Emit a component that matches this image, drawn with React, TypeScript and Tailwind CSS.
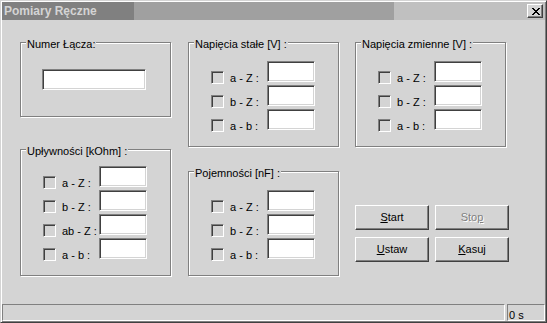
import type { ReactNode } from "react";

const sunken =
  "border border-t-[#808080] border-l-[#808080] border-b-white border-r-white shadow-[inset_1px_1px_0_#404040,inset_-1px_-1px_0_#d4d4d4]";

const closeGlyph = ["11000011", "01100110", "00111100", "00011000", "00111100", "01100110", "11000011"];

const Group = ({ label, className, children }: { label: string; className: string; children?: ReactNode }) => {
  return (
    <div className={"relative border border-[#808080] shadow-[inset_1px_1px_0_#fff,1px_1px_0_#fff] " + className}>
      <span className="absolute left-[5px] -top-[5px] whitespace-nowrap bg-[#d4d4d4] px-px leading-[13px]">
        {label}
      </span>
      {children}
    </div>
  );
};

const Row = ({ label }: { label: string }) => {
  return (
    <div className="flex h-[21px] items-start">
      <span className={"mt-[10px] h-[13px] w-[13px] bg-[#d4d4d4] " + sunken} />
      <span className="mt-[11px] w-[43px] whitespace-nowrap pl-[6px] leading-[13px]">{label}</span>
      <span className={"h-[21px] w-[48px] bg-white " + sunken} />
    </div>
  );
};

const Rows = ({ labels, top }: { labels: string[]; top: string }) => {
  return (
    <div className={"flex flex-col gap-[3px] pl-[22px] " + top}>
      {labels.map((l) => (
        <Row key={l} label={l} />
      ))}
    </div>
  );
};

const Btn = ({ children, disabled }: { children: ReactNode; disabled?: boolean }) => {
  return (
    <div
      className={
        "flex h-[25px] w-[74px] items-center justify-center border border-t-white border-l-white border-b-[#404040] border-r-[#404040] leading-[13px] shadow-[inset_-1px_-1px_0_#808080] " +
        (disabled ? "text-[#808080] [text-shadow:1px_1px_0_#fff]" : "")
      }
    >
      {children}
    </div>
  );
};

const App = () => {
  const three = ["a - Z :", "b - Z :", "a - b :"];

  return (
    <div className="h-[323px] w-[547px] bg-[#d4d4d4] font-['Liberation_Sans',Arial,sans-serif] text-[11px] text-black">
      <div className="flex h-full w-full flex-col border border-t-[#d4d4d4] border-l-[#d4d4d4] border-b-[#404040] border-r-[#404040] p-px shadow-[inset_1px_1px_0_#fff,inset_-1px_-1px_0_#808080]">
        {/* title bar */}
        <div className="flex h-[18px] items-center justify-between bg-[linear-gradient(to_right,#808080_132px,#a0a0a0_132px,#a0a0a0_392px,#c0c0c0_392px)]">
          <span className="pl-[2px] text-[12px] font-bold leading-[14px] text-[#d4d4d4]">Pomiary Ręczne</span>
          <div className="mr-[2px] flex h-[14px] w-[16px] items-center justify-center border border-t-white border-l-white border-b-[#404040] border-r-[#404040] bg-[#d4d4d4] shadow-[inset_-1px_-1px_0_#808080]">
            <svg width="8" height="7" viewBox="0 0 8 7" className="ml-px">
              {closeGlyph.map((row, y) =>
                row.split("").map((c, x) => (c === "1" ? <rect key={x + "-" + y} x={x} y={y} width="1" height="1" fill="#000" /> : null))
              )}
            </svg>
          </div>
        </div>

        {/* body */}
        <div className="flex flex-1 pl-[18px] pt-[22px]">
          <div className="flex w-[151px] flex-col">
            <Group label="Numer Łącza:" className="h-[75px]">
              <div className="pl-[21px] pt-[26px]">
                <div className={"h-[21px] w-[104px] bg-white " + sunken} />
              </div>
            </Group>
            <Group label="Upływności [kOhm] :" className="mt-[32px] h-[127px]">
              <Rows labels={["a - Z :", "b - Z :", "ab - Z :", "a - b :"]} top="pt-[16px]" />
            </Group>
          </div>

          <div className="ml-[17px] flex w-[151px] flex-col">
            <Group label="Napięcia stałe [V] :" className="h-[105px]">
              <Rows labels={three} top="pt-[18px]" />
            </Group>
            <Group label="Pojemności [nF] :" className="mt-[24px] h-[105px]">
              <Rows labels={three} top="pt-[18px]" />
            </Group>
          </div>

          <div className="ml-[16px] flex flex-col">
            <Group label="Napięcia zmienne [V] :" className="h-[105px] w-[151px]">
              <Rows labels={three} top="pt-[18px]" />
            </Group>
            <div className="mt-[58px] flex flex-col gap-[7px]">
              <div className="flex gap-[6px]">
                <Btn>
                  <u>S</u>tart
                </Btn>
                <Btn disabled>
                  Sto<u>p</u>
                </Btn>
              </div>
              <div className="flex gap-[6px]">
                <Btn>
                  <u>U</u>staw
                </Btn>
                <Btn>
                  <u>K</u>asuj
                </Btn>
              </div>
            </div>
          </div>
        </div>

        {/* status bar */}
        <div className="flex h-[17px] gap-[2px]">
          <div className="flex-1 border border-t-[#808080] border-l-[#808080] border-b-white border-r-white" />
          <div className="w-[38px] border border-t-[#808080] border-l-[#808080] border-b-white border-r-white pl-px pt-[4px] leading-[13px]">
            0 s
          </div>
        </div>
      </div>
    </div>
  );
};

export default App;
